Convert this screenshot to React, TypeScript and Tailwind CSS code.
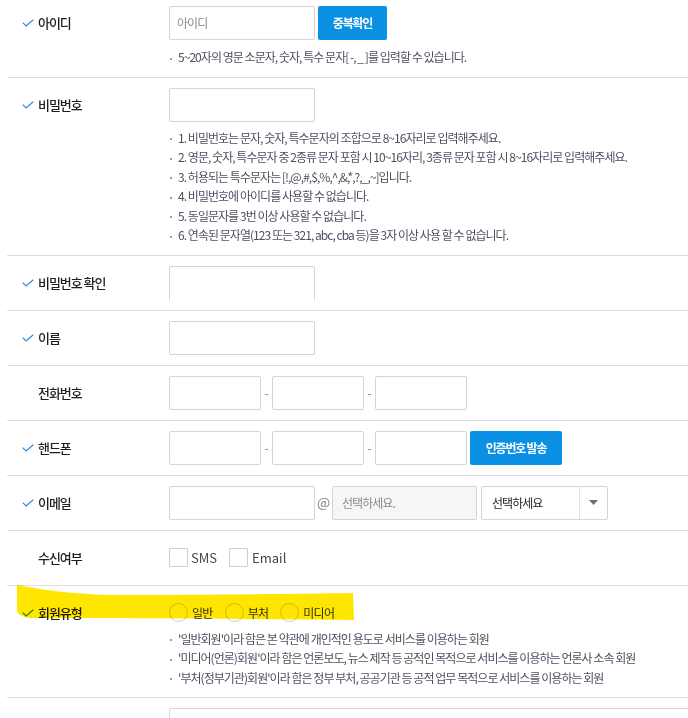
import React from "react";

const Check = () => (
  <svg width="12" height="8" viewBox="0 0 12 8" className="shrink-0">
    <path d="M0.7 3.6 L4.1 6.9 L11.3 0.7" fill="none" stroke="#2f8fe0" strokeWidth="1.3" />
  </svg>
);

function Label({ text, check }: { text: string; check: boolean }) {
  return (
    <div className="w-[162px] shrink-0 h-[34px] flex items-center pl-[15px]">
      {check ? <Check /> : <span className="w-[12px] shrink-0" />}
      <span className="ml-[4px] text-[13px] font-medium tracking-[-0.08em] text-[#1e1e1e]">{text}</span>
    </div>
  );
}

function Hints({ items, className }: { items: string[]; className: string }) {
  return (
    <ul className={className}>
      {items.map((t) => (
        <li key={t} className="flex items-center leading-[19.5px] text-[12px] tracking-[-0.08em] text-[#4c5160] whitespace-nowrap">
          <span className="w-[2px] h-[2px] bg-[#9aa0aa] ml-[1px] mr-[6px] mt-[4px] shrink-0" />
          <span>{t}</span>
        </li>
      ))}
    </ul>
  );
}

const Box = ({ w }: { w: string }) => (
  <div className={`${w} h-[34px] border border-[#d5d5d5] rounded-[2px] bg-white shrink-0`} />
);

const Dash = () => <span className="w-[11px] text-center text-[12px] text-[#888] shrink-0">-</span>;

function PhoneInputs() {
  return (
    <>
      <div className="w-[92px] h-[34px] border border-[#d5d5d5] rounded-[2px] bg-white shrink-0" />
      <Dash />
      <div className="w-[92px] h-[34px] border border-[#d5d5d5] rounded-[2px] bg-white shrink-0" />
      <Dash />
      <div className="w-[92px] h-[34px] border border-[#d5d5d5] rounded-[2px] bg-white shrink-0" />
    </>
  );
}

export default function App() {
  return (
    <div className="relative w-[688px] h-[718px] overflow-hidden bg-white pl-[7px] font-['Noto_Sans_CJK_KR',sans-serif]">
      {/* 아이디 */}
      <div className="flex border-b border-[#dedede] pt-[6px] pb-[10px]">
        <Label text="아이디" check />
        <div className="flex-1">
          <div className="flex items-center h-[34px]">
            <div className="w-[146px] h-[34px] border border-[#d5d5d5] rounded-[2px] bg-white flex items-center pl-[7px] text-[12px] tracking-[-0.08em] text-[#8a8a8a]">
              아이디
            </div>
            <div className="ml-[3px] w-[69px] h-[34px] rounded-[2px] bg-[#0a90e4] flex items-center justify-center text-white text-[12px] font-bold tracking-[-0.1em]">
              중복확인
            </div>
          </div>
          <Hints className="mt-[7px]" items={["5~20자의 영문 소문자, 숫자, 특수 문자[ -, _ ]를 입력할 수 있습니다."]} />
        </div>
      </div>

      {/* 비밀번호 */}
      <div className="flex border-b border-[#dedede] pt-[10px] pb-[10px]">
        <Label text="비밀번호" check />
        <div className="flex-1">
          <Box w="w-[146px]" />
          <Hints
            className="mt-[6px]"
            items={[
              "1. 비밀번호는 문자, 숫자, 특수문자의 조합으로 8~16자리로 입력해주세요.",
              "2. 영문, 숫자, 특수문자 중 2종류 문자 포함 시 10~16자리, 3종류 문자 포함 시 8~16자리로 입력해주세요.",
              "3. 허용되는 특수문자는 [!,@,#,$,%,^,&,*,?,_,~]입니다.",
              "4. 비밀번호에 아이디를 사용할 수 없습니다.",
              "5. 동일문자를 3번 이상 사용할 수 없습니다.",
              "6. 연속된 문자열(123 또는 321, abc, cba 등)을 3자 이상 사용 할 수 없습니다.",
            ]}
          />
        </div>
      </div>

      {/* 비밀번호 확인 */}
      <div className="flex border-b border-[#dedede] pt-[10px] pb-[10px]">
        <Label text="비밀번호 확인" check />
        <div className="flex-1">
          <div className="w-[146px] h-[34px] border border-b-0 border-[#d5d5d5] rounded-t-[2px] bg-white" />
        </div>
      </div>

      {/* 이름 */}
      <div className="flex border-b border-[#dedede] pt-[10px] pb-[10px]">
        <Label text="이름" check />
        <div className="flex-1">
          <Box w="w-[146px]" />
        </div>
      </div>

      {/* 전화번호 */}
      <div className="flex border-b border-[#dedede] pt-[10px] pb-[10px]">
        <Label text="전화번호" check={false} />
        <div className="flex-1 flex items-center h-[34px]">
          <PhoneInputs />
        </div>
      </div>

      {/* 핸드폰 */}
      <div className="flex border-b border-[#dedede] pt-[10px] pb-[10px]">
        <Label text="핸드폰" check />
        <div className="flex-1 flex items-center h-[34px]">
          <PhoneInputs />
          <div className="ml-[3px] w-[92px] h-[34px] rounded-[2px] bg-[#0a90e4] flex items-center justify-center text-white text-[12px] font-bold tracking-[-0.1em]">
            인증번호 발송
          </div>
        </div>
      </div>

      {/* 이메일 */}
      <div className="flex border-b border-[#dedede] pt-[10px] pb-[10px]">
        <Label text="이메일" check />
        <div className="flex-1 flex items-center h-[34px]">
          <Box w="w-[146px]" />
          <span className="w-[17px] text-center text-[14px] text-[#888] shrink-0">@</span>
          <div className="w-[145px] h-[34px] border border-[#d5d5d5] rounded-[2px] bg-[#f6f6f6] flex items-center pl-[9px] text-[12px] tracking-[-0.08em] text-[#8a8a8a] shrink-0">
            선택하세요.
          </div>
          <div className="ml-[4px] w-[127px] h-[34px] border border-[#d5d5d5] rounded-[2px] bg-white flex items-stretch shrink-0">
            <div className="flex-1 flex items-center pl-[10px] text-[12px] tracking-[-0.08em] text-[#222]">선택하세요</div>
            <div className="w-[28px] border-l border-[#e2e2e2] flex items-center justify-center">
              <svg width="9" height="5" viewBox="0 0 9 5">
                <path d="M0 0 L9 0 L4.5 5 Z" fill="#6f6f6f" />
              </svg>
            </div>
          </div>
        </div>
      </div>

      {/* 수신여부 */}
      <div className="flex border-b border-[#dedede] pt-[10px] pb-[10px]">
        <Label text="수신여부" check={false} />
        <div className="flex-1 flex items-center h-[34px] text-[13px] text-[#444]">
          <span className="w-[19px] h-[19px] border border-[#cfcfcf] rounded-[1px] bg-white shrink-0" />
          <span className="ml-[3px]">SMS</span>
          <span className="ml-[12px] w-[19px] h-[19px] border border-[#cfcfcf] rounded-[1px] bg-white shrink-0" />
          <span className="ml-[4px]">Email</span>
        </div>
      </div>

      {/* 회원유형 */}
      <div className="flex border-b border-[#dedede] pt-[14px] pb-[10px]">
        <div className="w-[162px] shrink-0 h-[26px] flex items-center pl-[15px]">
          <Check />
          <span className="ml-[4px] text-[13px] font-medium tracking-[-0.08em] text-[#1e1e1e]">회원유형</span>
        </div>
        <div className="flex-1">
          <div className="flex items-center h-[26px] text-[12px] tracking-[-0.06em] text-[#333]">
            <span className="w-[19px] h-[19px] border border-[#cfcfcf] rounded-full bg-white shrink-0" />
            <span className="ml-[4px]">일반</span>
            <span className="ml-[12px] w-[19px] h-[19px] border border-[#cfcfcf] rounded-full bg-white shrink-0" />
            <span className="ml-[4px]">부처</span>
            <span className="ml-[12px] w-[19px] h-[19px] border border-[#cfcfcf] rounded-full bg-white shrink-0" />
            <span className="ml-[4px]">미디어</span>
          </div>
          <Hints
            className="mt-[3px]"
            items={[
              "'일반회원'이라 함은 본 약관에 개인적인 용도로 서비스를 이용하는 회원",
              "'미디어(언론)회원'이라 함은 언론보도, 뉴스 제작 등 공적인 목적으로 서비스를 이용하는 언론사 소속 회원",
              "'부처(정부기관)회원'이라 함은 정부 부처, 공공기관 등 공적 업무 목적으로 서비스를 이용하는 회원",
            ]}
          />
        </div>
      </div>

      {/* 다음 행 (잘림) */}
      <div className="flex pt-[10px] pb-[10px]">
        <Label text="소속기관" check={false} />
        <div className="flex-1">
          <div className="w-[560px] h-[34px] border border-[#d5d5d5] rounded-[2px] bg-white" />
        </div>
      </div>

      {/* 형광펜 하이라이트 */}
      <svg
        className="absolute left-0 top-0 pointer-events-none mix-blend-multiply"
        width="688"
        height="718"
        viewBox="0 0 688 718"
      >
        <path
          d="M17 585 C 38 589, 70 594, 110 595 C 200 595, 290 594, 353 593 L 354 620 C 250 619, 120 618, 30 618 C 22 617, 17 614, 17 610 Z"
          fill="#ffe600"
        />
      </svg>
    </div>
  );
}
